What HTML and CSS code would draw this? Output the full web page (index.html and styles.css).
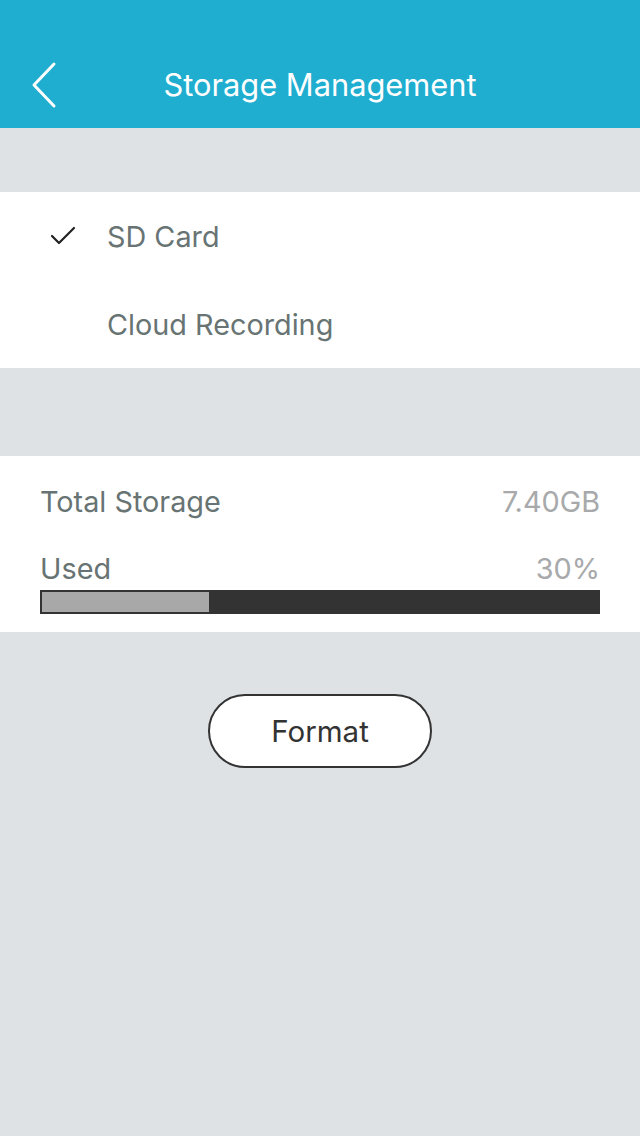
FILE: index.html
```html
<!DOCTYPE html>
<html lang="en">
<head>
  <meta charset="UTF-8" />
  <meta name="viewport" content="width=device-width, initial-scale=1.0"/>
  <title>Storage Management</title>
  <link rel="stylesheet" href="styles.css">
</head>
<body>
<header class="topbar">
  <button class="back" aria-label="Back">
    <svg width="28" height="48" viewBox="0 0 28 48"><polyline points="24,3 4,24 24,45" fill="none" stroke="#fff" stroke-width="3" stroke-linecap="round" stroke-linejoin="round"/></svg>
  </button>
  <h1>Storage Management</h1>
</header>

<div class="spacer small"></div>

<section class="panel options">
  <div class="option">
    <span class="tick">
      <svg width="26" height="20" viewBox="0 0 26 20"><polyline points="2,10 9,17 24,2" fill="none" stroke="#222" stroke-width="2.2" stroke-linecap="round" stroke-linejoin="round"/></svg>
    </span>
    <span>SD Card</span>
  </div>
  <div class="option">
    <span class="tick"></span>
    <span>Cloud Recording</span>
  </div>
</section>

<div class="spacer"></div>

<section class="panel storage">
  <div class="row">
    <span>Total Storage</span>
    <span class="value">7.40GB</span>
  </div>
  <div class="row used">
    <span>Used</span>
    <span class="value">30%</span>
  </div>
  <div class="bar"><div class="fill" style="width: 30%"></div></div>
</section>

<div class="actions">
  <button class="format">Format</button>
</div>
</body>
</html>
```

FILE: styles.css
```css
body { margin: 0; background: #dfe2e5; font-family: Inter, "Open Sans", sans-serif; height: 1136px; }
.topbar { background: #1fadd0; height: 128px; position: relative; display: flex; align-items: center; justify-content: center; box-sizing: border-box; padding-top: 40px; }
.topbar h1 { margin: 0; color: #fff; font-weight: 400; font-size: 30.8px; }
.back { position: absolute; left: 30px; top: 61px; background: none; border: none; padding: 0; width: 28px; height: 48px; }
.spacer { height: 88px; }
.spacer.small { height: 64px; }
.panel { background: #fff; }
.options { padding: 0; }
.option { display: flex; align-items: center; height: 88px; color: #687473; font-size: 28.8px; }
.tick { width: 107px; display: flex; justify-content: flex-start; padding-left: 50px; box-sizing: border-box; }
.storage { padding: 0 40px 18px; }
.row { display: flex; justify-content: space-between; align-items: center; color: #687473; font-size: 28.8px; height: 90px; }
.row.used { height: 40px; align-items: flex-end; padding-bottom: 4px; }
.value { color: #a7a9aa; }
.bar { height: 24px; background: #333; box-sizing: border-box; border: 2px solid #333; }
.fill { height: 100%; background: #a8a8a8; }
.actions { display: flex; justify-content: center; padding-top: 62px; }
.format { width: 224px; height: 74px; border-radius: 37px; border: 2px solid #333; background: #fff; font-family: inherit; font-size: 29.5px; color: #333; }
```
